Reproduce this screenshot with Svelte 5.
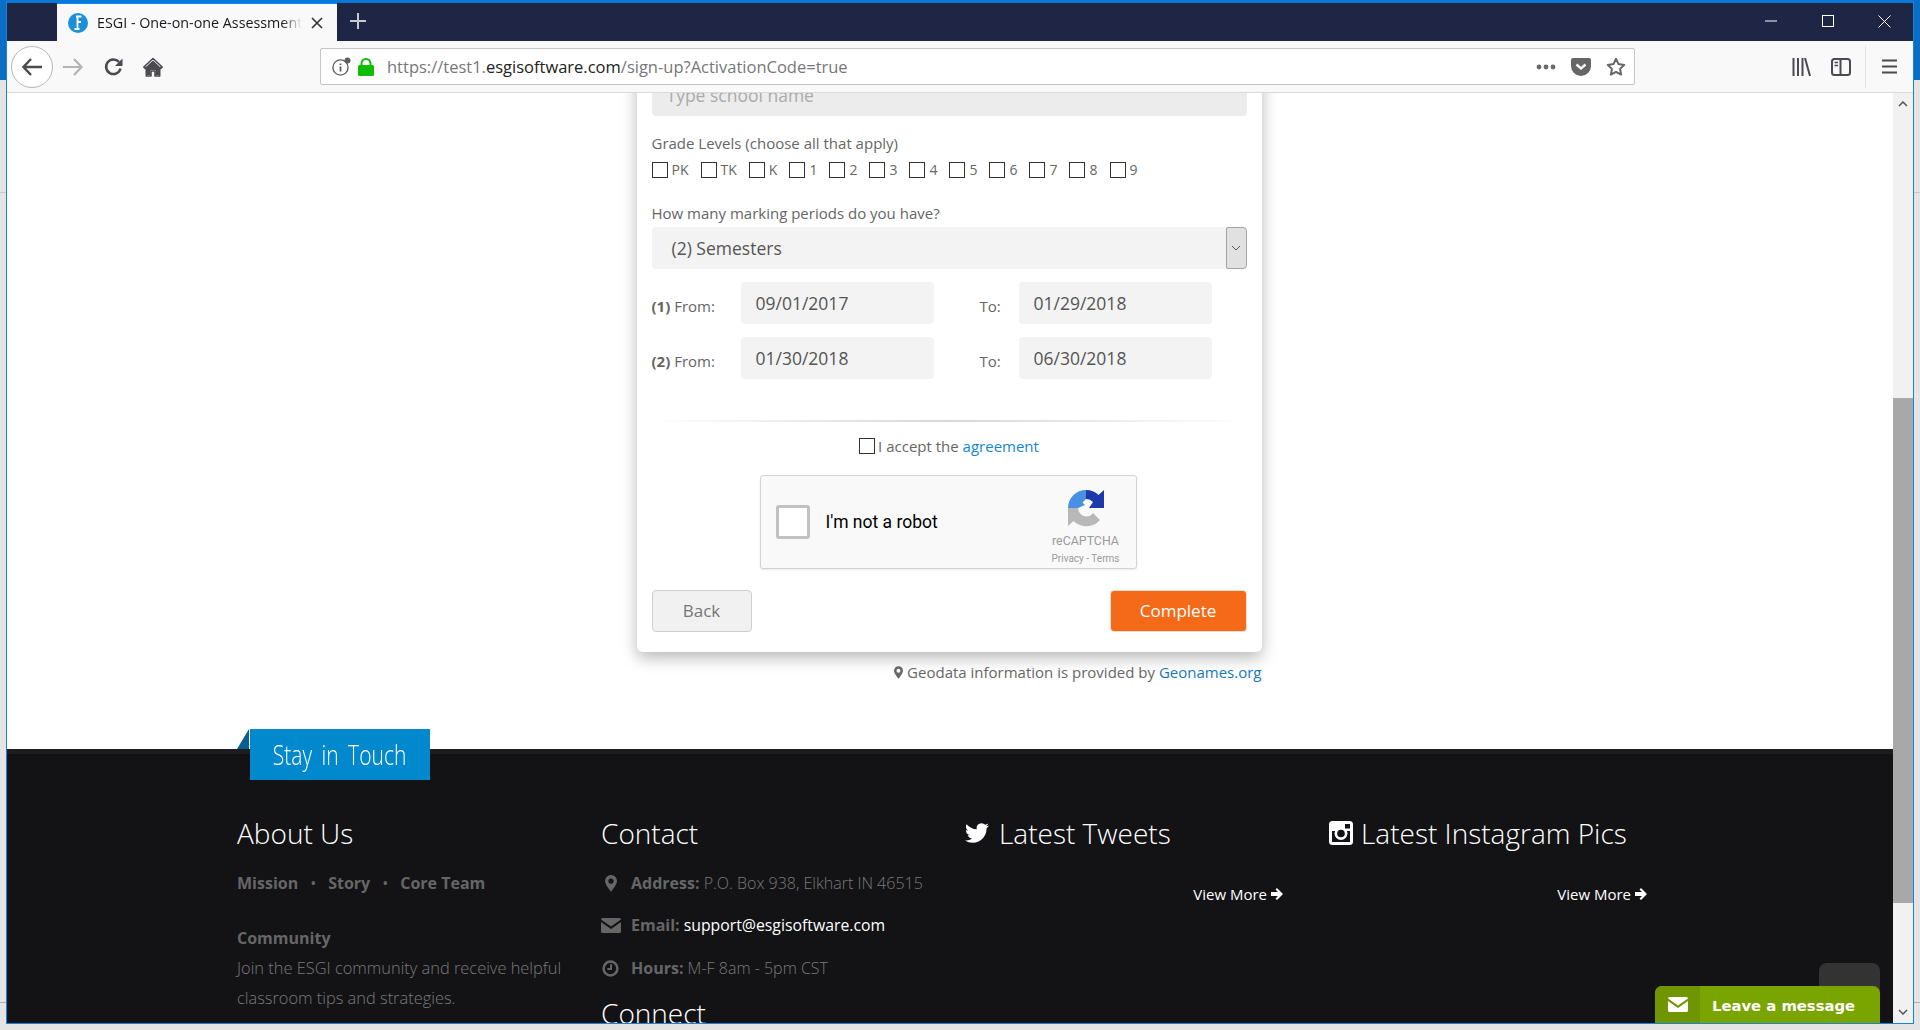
<script>
  const grades = ['PK','TK','K','1','2','3','4','5','6','7','8','9'];
  const periods = [
    { n: '(1)', from: '09/01/2017', to: '01/29/2018' },
    { n: '(2)', from: '01/30/2018', to: '06/30/2018' }
  ];
</script>

<div class="desktop">
  <div class="window">
    <header class="titlebar">
      <div class="tab">
        <svg class="favicon" viewBox="0 0 20 20"><circle cx="10" cy="10" r="10" fill="#1b8fd8"/><path d="M8 3.5h5.5M9.5 3.5v12M9.5 9h3.5M6.5 16h5" stroke="#fff" stroke-width="1.8" fill="none"/></svg>
        <span class="tabtitle">ESGI - One-on-one Assessment</span>
        <svg class="tabclose" viewBox="0 0 12 12"><path d="M1 1l10 10M11 1L1 11" stroke="#333" stroke-width="1.6"/></svg>
      </div>
      <svg class="newtab" viewBox="0 0 18 18"><path d="M9 1v16M1 9h16" stroke="#c6c8d2" stroke-width="2"/></svg>
      <div class="winbtns">
        <svg class="wmin" viewBox="0 0 12 12"><path d="M0 6h12" stroke="#fff"/></svg>
        <svg class="wmax" viewBox="0 0 12 12"><rect x=".5" y=".5" width="11" height="11" fill="none" stroke="#fff"/></svg>
        <svg class="wclose" viewBox="0 0 13 13"><path d="M.5.5l12 12M12.5.5l-12 12" stroke="#fff"/></svg>
      </div>
    </header>

    <nav class="toolbar">
      <div class="backbtn">
        <svg viewBox="0 0 20 18"><path d="M9 1L1.5 9 9 17M2 9h18" fill="none" stroke="#4a4a4f" stroke-width="2.4"/></svg>
      </div>
      <svg class="forward" viewBox="0 0 20 18"><path d="M11 1l7.5 8-7.5 8M18 9H0" fill="none" stroke="#b4b4b6" stroke-width="2.2"/></svg>
      <svg class="reload" viewBox="0 0 20 20"><path d="M16.5 11.5A7.3 7.3 0 1 1 15 5" fill="none" stroke="#4a4a4f" stroke-width="2.5"/><path d="M18.5 1.5v7.5H11z" fill="#4a4a4f"/></svg>
      <svg class="home" viewBox="0 0 20 20"><path d="M10 1.5L0.8 10l1.200 1.300L3.300 10.200V19H8v-5h4v5h4.700v-8.800l1.300 1.100L19.200 10z" fill="none" stroke="#4a4a4f" stroke-width="1.600" stroke-linejoin="round"/><path d="M10 3.500L4 9v9h3.500v-5h5v5H16V9z" fill="#4a4a4f"/></svg>

      <div class="urlbar">
        <svg class="info" viewBox="0 0 19 19"><circle cx="8.500" cy="10.500" r="7.600" fill="none" stroke="#5f5f62" stroke-width="1.400"/><path d="M8.500 9.500v5M8.500 6.500v1.600" stroke="#5f5f62" stroke-width="1.800"/><circle cx="15.500" cy="3.500" r="3" fill="#5f5f62"/></svg>
        <svg class="lock" viewBox="0 0 16 18"><path d="M3.500 8V5.500a4.500 4.500 0 0 1 9 0V8" fill="none" stroke="#12bc00" stroke-width="2"/><rect y="7" width="16" height="11" rx="1.500" fill="#12bc00"/></svg>
        <span class="url">https://test1.<b>esgisoftware.com</b>/sign-up?ActivationCode=true</span>
        <svg class="dots" viewBox="0 0 20 6"><circle cx="3" cy="3" r="2.400" fill="#6a6a6d"/><circle cx="10" cy="3" r="2.400" fill="#6a6a6d"/><circle cx="17" cy="3" r="2.400" fill="#6a6a6d"/></svg>
        <svg class="pocket" viewBox="0 0 20 18"><path d="M2 0h16a2 2 0 0 1 2 2v6a10 10 0 0 1-20 0V2a2 2 0 0 1 2-2z" fill="#666"/><path d="M5.500 6.500L10 10.500l4.500-4" fill="none" stroke="#f9f9fa" stroke-width="2.400"/></svg>
        <svg class="star" viewBox="0 0 20 19"><path d="M10 1.800l2.500 5.300 5.800.8-4.200 4 1 5.700L10 14.900l-5.100 2.700 1-5.700-4.200-4 5.800-.8z" fill="none" stroke="#666" stroke-width="2" stroke-linejoin="round"/></svg>
      </div>

      <svg class="library" viewBox="0 0 19 18"><path d="M1.500 0v18M6 0v18M10.500 0v18M13 0l5 18" fill="none" stroke="#4a4a4f" stroke-width="2"/></svg>
      <svg class="sidebar" viewBox="0 0 20 18"><rect x="1" y="1" width="18" height="16" rx="2.500" fill="none" stroke="#4a4a4f" stroke-width="2"/><path d="M9.500 1v16" stroke="#4a4a4f" stroke-width="2"/><path d="M3.500 4.500h3.500M3.500 7.500h3.500" stroke="#4a4a4f" stroke-width="1.500"/></svg>
      <div class="tbsep"></div>
      <svg class="burger" viewBox="0 0 15 15"><path d="M0 1.500h15M0 7.500h15M0 13.500h15" stroke="#4a4a4f" stroke-width="2"/></svg>
    </nav>

    <div class="viewport">
      <main class="page">
        <div class="content">
          <form class="card">
            <input class="field school" placeholder="Type school name" />

            <p class="label grade-label">Grade Levels (choose all that apply)</p>
            <div class="grades">
              {#each grades as g}
                <label class="grade"><input class="cb" type="checkbox" />{g}</label>
              {/each}
            </div>

            <p class="label mark-label">How many marking periods do you have?</p>
            <div class="select">
              <span>(2) Semesters</span>
              <span class="selarrow"><svg viewBox="0 0 10 6"><path d="M1 1l4 4 4-4" fill="none" stroke="#555" stroke-width="1"/></svg></span>
            </div>

            {#each periods as p}
              <div class="dates">
                <span class="dlabel"><b>{p.n}</b> From:</span>
                <input class="field date" value={p.from} readonly />
                <span class="dlabel to">To:</span>
                <input class="field date" value={p.to} readonly />
              </div>
            {/each}

            <div class="divider"></div>

            <label class="accept"><input class="cb" type="checkbox" />I accept the&nbsp;<a href="#a">agreement</a></label>

            <div class="recaptcha">
              <span class="rc-box"></span>
              <span class="rc-text">I'm not a robot</span>
              <div class="rc-brand">
                <svg viewBox="0 0 38 38">
                  <path d="M1 19A18 18 0 0 1 19 1V10L15.500 13.500 18 16 11 19Z" fill="#4a90e2"/>
                  <path d="M19 1A18 18 0 0 1 31.500 6L37 1V19H22L26 13A9 9 0 0 0 19 10Z" fill="#1c3aa9"/>
                  <path d="M1 19H11A8.500 8.500 0 0 0 19 27.500 8.500 8.500 0 0 0 26 24L33 31A18 18 0 0 1 6.500 32L1 37Z" fill="#b8b8b8"/>
                </svg>
                <span class="rc-name">reCAPTCHA</span>
                <span class="rc-links">Privacy - Terms</span>
              </div>
            </div>

            <div class="actions">
              <button type="button" class="btn back">Back</button>
              <button type="button" class="btn complete">Complete</button>
            </div>
          </form>

          <p class="geodata">
            <svg viewBox="0 0 10 14"><path d="M5 0a5 5 0 0 0-5 5c0 3 5 9 5 9s5-6 5-9a5 5 0 0 0-5-5zm0 7.200A2.200 2.200 0 1 1 5 2.800a2.200 2.200 0 0 1 0 4.400z" fill="#666"/></svg>
            Geodata information is provided by <a href="#g">Geonames.org</a>
          </p>
        </div>

        <footer class="footer">
          <div class="banner"><span>Stay in Touch</span></div>
          <div class="cols">
            <section>
              <h2>About Us</h2>
              <p class="links"><b>Mission</b><i>•</i><b>Story</b><i>•</i><b>Core Team</b></p>
              <p class="community"><b>Community</b></p>
              <p class="join">Join the ESGI community and receive helpful<br />classroom tips and strategies.</p>
            </section>
            <section>
              <h2>Contact</h2>
              <ul class="contact">
                <li><span class="ci"><svg class="pin" viewBox="0 0 10 14"><path d="M5 0a5 5 0 0 0-5 5c0 3 5 9 5 9s5-6 5-9a5 5 0 0 0-5-5zm0 7.200A2.200 2.200 0 1 1 5 2.800a2.200 2.200 0 0 1 0 4.400z" fill="#666"/></svg></span><b>Address:</b> P.O. Box 938, Elkhart IN 46515</li>
                <li><span class="ci"><svg class="mail" viewBox="0 0 20 15"><path d="M1.500 0h17A1.500 1.500 0 0 1 20 1.500L10 8.500 0 1.500A1.500 1.500 0 0 1 1.500 0zM0 4l10 7 10-7v9.500a1.500 1.500 0 0 1-1.500 1.500h-17A1.500 1.500 0 0 1 0 13.500z" fill="#666"/></svg></span><b>Email:</b> <a href="#m">support@esgisoftware.com</a></li>
                <li><span class="ci"><svg class="clock" viewBox="0 0 16 16"><circle cx="8" cy="8" r="6.500" fill="none" stroke="#666" stroke-width="2.400"/><path d="M8.500 4v4.500H5" fill="none" stroke="#666" stroke-width="1.800"/></svg></span><b>Hours:</b> M-F 8am - 5pm CST</li>
              </ul>
              <h2 class="connect">Connect</h2>
            </section>
            <section>
              <h2 class="withicon">
                <svg class="tw" viewBox="0 0 24 24"><path d="M23.953 4.570a10 10 0 0 1-2.825.775 4.958 4.958 0 0 0 2.163-2.723c-.951.555-2.005.959-3.127 1.184a4.920 4.920 0 0 0-8.384 4.482C7.690 8.095 4.067 6.130 1.640 3.162a4.822 4.822 0 0 0-.666 2.475c0 1.710.870 3.213 2.188 4.096a4.904 4.904 0 0 1-2.228-.616v.060a4.923 4.923 0 0 0 3.946 4.827 4.996 4.996 0 0 1-2.212.085 4.936 4.936 0 0 0 4.604 3.417 9.867 9.867 0 0 1-6.102 2.105c-.390 0-.779-.023-1.170-.067a13.995 13.995 0 0 0 7.557 2.209c9.053 0 13.998-7.496 13.998-13.985 0-.210 0-.420-.015-.630A9.935 9.935 0 0 0 24 4.590z" fill="#fff"/></svg>
                Latest Tweets
              </h2>
              <a class="more" href="#t">View More <svg viewBox="0 0 12 12"><path d="M6 0l6 6-6 6-1.500-1.500L7 8H0V4h7L4.500 1.500z" fill="#fff"/></svg></a>
            </section>
            <section>
              <h2 class="withicon ig">
                <svg class="igicon" viewBox="0 0 24 24"><rect width="24" height="24" rx="3.500" fill="#fff"/><rect x="3" y="10" width="18" height="11" fill="#131316"/><circle cx="12" cy="12.500" r="6.500" fill="#fff"/><circle cx="12" cy="12.500" r="3.800" fill="#131316"/><rect x="16" y="3" width="5" height="4.500" fill="#131316"/></svg>
                Latest Instagram Pics
              </h2>
              <a class="more" href="#i">View More <svg viewBox="0 0 12 12"><path d="M6 0l6 6-6 6-1.500-1.500L7 8H0V4h7L4.500 1.500z" fill="#fff"/></svg></a>
            </section>
          </div>
        </footer>
      </main>

      <aside class="scrollbar">
        <svg class="arrow" viewBox="0 0 10 6"><path d="M1 5l4-4 4 4" fill="none" stroke="#555" stroke-width="1.500"/></svg>
        <div class="track"><div class="thumb"></div></div>
        <svg class="arrow" viewBox="0 0 10 6"><path d="M1 1l4 4 4-4" fill="none" stroke="#555" stroke-width="1.500"/></svg>
      </aside>

      <div class="totop"></div>
      <button type="button" class="chat">
        <span class="chaticon"><svg viewBox="0 0 20 15"><path d="M1.500 0h17A1.500 1.500 0 0 1 20 1.500L10 8.500 0 1.500A1.500 1.500 0 0 1 1.500 0zM0 4l10 7 10-7v9.500a1.500 1.500 0 0 1-1.500 1.500h-17A1.500 1.500 0 0 1 0 13.500z" fill="#fff"/></svg></span>
        <span class="chattext">Leave a message</span>
      </button>
    </div>
  </div>
</div>

<style>
  :global(body) { margin: 0; overflow: hidden; }
  * { box-sizing: border-box; }
  p, h2, ul { margin: 0; padding: 0; }
  ul { list-style: none; }
  a { text-decoration: none; }

  .desktop {
    width: 1920px; height: 1030px; overflow: hidden;
    background:
      linear-gradient(transparent 1002px, #b0b0b0 1002px, #b0b0b0 1003px, transparent 1003px),
      linear-gradient(transparent 192px, #c8c8c8 192px, #c8c8c8 193px, transparent 193px),
      linear-gradient(#0a6ec4 0 80px, #e4e4e4 80px);
    padding: 0 6px 6px;
    font-family: "Open Sans", "Liberation Sans", sans-serif;
    color: #666;
  }
  .window {
    width: 1908px; height: 1024px;
    display: flex; flex-direction: column;
    border: 1px solid #1a82d8;
    border-top: 3px solid #0a78d7;
  }

  .titlebar { height: 38px; background: #1f2544; display: flex; align-items: stretch; flex: none; }
  .tab {
    width: 280px; margin-left: 50px; background: #f9f9fa; display: flex; align-items: center;
    padding-left: 11px; border-top: 1px solid #0a84ff;
  }
  .favicon { width: 20px; height: 20px; flex: none; }
  .tabtitle {
    margin-left: 9px; width: 205px; white-space: nowrap; overflow: hidden; font-size: 14.300px; color: #18191e;
    -webkit-mask-image: linear-gradient(to right, #000 185px, transparent 205px);
    mask-image: linear-gradient(to right, #000 185px, transparent 205px);
  }
  .tabclose { width: 12px; height: 12px; margin-left: 9px; flex: none; }
  .newtab { width: 18px; height: 18px; margin: 9px 0 0 12px; flex: none; }
  .winbtns { margin-left: auto; display: flex; align-items: center; padding-right: 22px; padding-bottom: 2px; }
  .wmin { width: 12px; height: 12px; margin-right: 45px; }
  .wmax { width: 12px; height: 12px; margin-right: 44px; }
  .wclose { width: 13px; height: 13px; }

  .toolbar {
    height: 52px; background: #f9f9fa; border-bottom: 1px solid #d9d9db; flex: none;
    display: flex; align-items: center; padding-left: 4px;
  }
  .backbtn {
    width: 42px; height: 42px; border-radius: 50%; border: 1px solid #b8b8ba; background: #fff;
    display: flex; align-items: center; justify-content: center; flex: none;
  }
  .backbtn svg { width: 20px; height: 18px; }
  .forward { width: 20px; height: 18px; margin-left: 10px; flex: none; }
  .reload { width: 20px; height: 20px; margin-left: 21px; flex: none; }
  .home { width: 20px; height: 20px; margin-left: 19px; flex: none; }

  .urlbar {
    width: 1315px; height: 37px; margin-left: 157px; background: #fff; border: 1px solid #c4c4c6; border-radius: 2px;
    display: flex; align-items: center; flex: none; padding-left: 11px;
  }
  .info { width: 19px; height: 19px; flex: none; }
  .lock { width: 16px; height: 18px; margin-left: 7px; flex: none; }
  .url { margin-left: 13px; font-size: 16.500px; color: #777; white-space: nowrap; }
  .url b { font-weight: 400; color: #222; }
  .dots { width: 20px; height: 6px; margin-left: auto; flex: none; }
  .pocket { width: 20px; height: 18px; margin-left: 15px; flex: none; }
  .star { width: 20px; height: 19px; margin-left: 15px; margin-right: 8px; flex: none; }
  .library { width: 19px; height: 18px; margin-left: 157px; flex: none; }
  .sidebar { width: 20px; height: 18px; margin-left: 20px; flex: none; }
  .tbsep { width: 1px; height: 42px; background: #e2e2e3; margin-left: 14px; flex: none; }
  .burger { width: 15px; height: 15px; margin-left: 16px; flex: none; }

  .viewport { position: relative; flex: 1; display: flex; min-height: 0; overflow: hidden; }
  .page { flex: 1; min-width: 0; display: flex; flex-direction: column; background: #fff; overflow: hidden; }
  .content { flex: none; display: flex; flex-direction: column; align-items: center; height: 656px; padding-right: 2px; }

  .card {
    width: 625px; margin-top: -39px; background: #fff; border-radius: 0 0 6px 6px; flex: none;
    padding: 20px 15px 20px;
    box-shadow: 0 6px 16px rgba(0,0,0,.28);
  }
  .field {
    display: block; border: 0; outline: 0; border-radius: 4px; background: #f3f3f3; height: 42px;
    font: 17.500px "Open Sans", sans-serif; color: #555; padding: 0 15px;
  }
  .school { width: 100%; background: #ececec; }
  .school::placeholder { color: #aaa; opacity: 1; }
  .label { font-size: 15px; line-height: 20px; color: #666; }
  .grade-label { margin-top: 17px; }
  .grades { display: flex; margin-top: 7px; height: 20px; }
  .grade { display: flex; align-items: center; font-size: 14px; line-height: 20px; color: #666; margin-right: 12px; }
  .cb {
    appearance: none; -webkit-appearance: none; width: 16px; height: 16px; margin: 0 4px 0 0;
    border: 1px solid #333; background: #fff; flex: none; border-radius: 0;
  }
  .mark-label { margin-top: 23px; }
  .select {
    margin-top: 4px; height: 42px; background: #f3f3f3; border-radius: 4px; display: flex; align-items: center;
    justify-content: space-between; padding-left: 20px; font-size: 17.500px; color: #555;
  }
  .selarrow {
    width: 21px; height: 42px; background: #e1e1e1; border: 1px solid #a3a3a3; border-radius: 2px 4px 4px 2px;
    display: flex; align-items: center; justify-content: center;
  }
  .selarrow svg { width: 10px; height: 6px; }
  .dates { display: flex; margin-top: 13px; align-items: flex-start; }
  .dlabel { font-size: 15px; line-height: 20px; padding-top: 14px; width: 89px; flex: none; color: #666; }
  .dlabel.to { width: 39px; margin-left: 46px; }
  .date { width: 193px; }

  .divider {
    margin-top: 41px; height: 2px;
    background: linear-gradient(to right, transparent, #d6d6d6 50%, transparent);
  }
  .accept {
    margin-top: 14px; display: flex; justify-content: center; align-items: center; font-size: 15px; line-height: 20px; color: #666;
  }
  .accept .cb { margin-right: 3px; }
  .accept a { color: #1487d0; }

  .recaptcha {
    width: 377px; height: 94px; margin: 19px 0 0 108px; background: #f9f9f9; border: 1px solid #d3d3d3; border-radius: 3px;
    display: flex; align-items: center; box-shadow: 0 1px 2px rgba(0,0,0,.08);
    font-family: Roboto, sans-serif;
  }
  .rc-box { width: 34px; height: 34px; margin-left: 15px; background: #fff; border: 3px solid #c1c1c1; border-radius: 3px; flex: none; }
  .rc-text { margin-left: 16px; font-size: 17.500px; color: #000; white-space: nowrap; }
  .rc-brand {
    margin-left: auto; margin-right: 16px; display: flex; flex-direction: column; align-items: center; width: 68px;
    align-self: flex-start; padding-top: 13px;
  }
  .rc-brand svg { width: 38px; height: 38px; flex: none; }
  .rc-name { font-size: 12.400px; color: #9b9b9b; line-height: 15px; margin-top: 5.500px; }
  .rc-links { font-size: 10px; color: #9b9b9b; line-height: 13px; margin-top: 4px; white-space: nowrap; }

  .actions { display: flex; justify-content: space-between; margin-top: 21px; }
  .btn { height: 42px; border-radius: 4px; font: 17px "Open Sans", sans-serif; padding: 0 0 2px; }
  .back { width: 100px; background: #f1f1f1; border: 1px solid #cfcfcf; color: #777; }
  .complete { width: 137px; background: #f56a18; border: 1px solid #e9e0da; color: #fff; }

  .geodata { width: 625px; margin-top: 10px; flex: none; font-size: 15px; line-height: 20px; text-align: right; color: #666; white-space: nowrap; }
  .geodata svg { width: 9px; height: 13px; vertical-align: -1px; }
  .geodata a { color: #1878b8; }

  .footer {
    flex: 1; min-height: 0; position: relative; background: #131316; border-top: 5px solid #1d1d20;
    padding: 59px 0 0 230px; color: #666;
  }
  .banner {
    position: absolute; left: 243px; top: -25px; width: 180px; height: 51px; background: #0288cd; color: #fff;
    display: flex; align-items: center; justify-content: center;
  }
  .banner span {
    font: 300 27px/51px "Open Sans", sans-serif; white-space: nowrap; word-spacing: 5px;
    transform: scaleX(.78);
  }
  .banner::before {
    content: ""; position: absolute; left: -13px; top: 0; width: 0; height: 0;
    border-style: solid; border-width: 0 0 20px 12px; border-color: transparent transparent #0a5f8f transparent;
  }
  .cols { display: grid; grid-template-columns: repeat(4, 364px); }
  h2 { font-weight: 300; font-size: 28px; line-height: 40px; color: #fff; white-space: nowrap; }
  .withicon { display: flex; align-items: center; gap: 10px; }
  .withicon.ig { gap: 8px; }
  .tw, .igicon { width: 24px; height: 24px; flex: none; }
  .links { margin-top: 20px; font-size: 16px; line-height: 20px; display: flex; }
  .links b { font-weight: 700; }
  .links i { font-style: normal; width: 30px; text-align: center; }
  .community { margin-top: 30px; font-size: 16px; line-height: 30px; }
  .join { font-size: 16.400px; line-height: 30px; font-weight: 300; color: #7a7a7a; white-space: nowrap; }
  .contact { margin-top: 20px; font-size: 16px; line-height: 20px; color: #7a7a7a; white-space: nowrap; }
  .contact li { display: flex; align-items: center; height: 20px; font-weight: 300; white-space: pre; }
  .contact li:nth-child(2) { margin-top: 22px; }
  .contact li:nth-child(3) { margin-top: 23px; }
  .contact b { font-weight: 700; color: #666; }
  .contact a { color: #fff; font-weight: 400; font-size: 15.800px; margin-left: 4px; }
  .ci { width: 30px; flex: none; display: flex; justify-content: flex-start; }
  .pin { width: 12px; height: 17px; margin-left: 4px; }
  .mail { width: 20px; height: 15px; }
  .clock { width: 17px; height: 17px; margin-left: 1px; }
  .connect { margin-top: 15px; }
  .more {
    display: flex; align-items: center; justify-content: flex-end; gap: 4px; width: 318px; margin-top: 31px;
    font-size: 15px; line-height: 20px; color: #fff;
  }
  .more svg { width: 12px; height: 12px; }

  .scrollbar { width: 20px; flex: none; background: #f1f1f1; display: flex; flex-direction: column; align-items: center; }
  .arrow { width: 10px; height: 6px; margin: 8px 0; flex: none; }
  .track { flex: 1; width: 100%; padding-top: 283px; }
  .thumb { height: 505px; background: #a8a8a8; }

  .totop { position: absolute; right: 33px; bottom: 23px; width: 61px; height: 37px; background: #333; border-radius: 8px 8px 0 0; }
  .chat {
    position: absolute; right: 33px; bottom: 0; width: 225px; height: 37px; display: flex; border: 0; padding: 0;
    background: #7aa500; border-radius: 7px 7px 0 0; color: #fff; overflow: hidden;
  }
  .chaticon { width: 45px; height: 100%; background: #6f9600; display: flex; align-items: center; justify-content: center; }
  .chaticon svg { width: 20px; height: 15px; }
  .chattext { margin-left: 12px; font: 700 14.800px/39px "DejaVu Sans", sans-serif; white-space: nowrap; }
</style>
